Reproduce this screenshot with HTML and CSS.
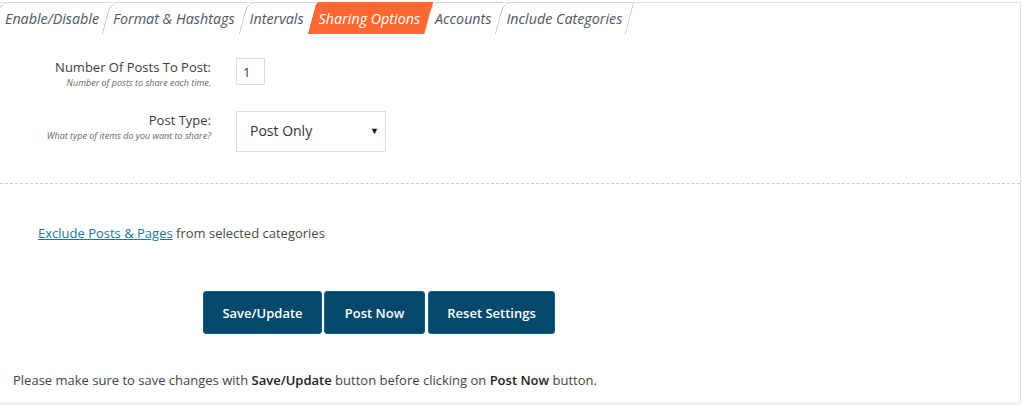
FILE: index.html
```html
<!DOCTYPE html>
<html>
<head>
<meta charset="utf-8">
<link rel="stylesheet" href="styles.css">
</head>
<body>
<div class="panel">
  <div class="tabs">
    <span class="tab first">Enable/Disable</span>
    <span class="tab">Format &amp; Hashtags</span>
    <span class="tab">Intervals</span>
    <span class="tab active">Sharing Options</span>
    <span class="tab">Accounts</span>
    <span class="tab last">Include Categories</span>
  </div>
  <div class="form">
    <div class="row row-num">
      <div class="label">
        <div class="title">Number Of Posts To Post:</div>
        <div class="desc">Number of posts to share each time.</div>
      </div>
      <div class="field"><input class="num" type="text" value="1"></div>
    </div>
    <div class="row row-type">
      <div class="label">
        <div class="title">Post Type:</div>
        <div class="desc">What type of items do you want to share?</div>
      </div>
      <div class="field">
        <div class="select"><span>Post Only</span><span class="arrow">▼</span></div>
      </div>
    </div>
  </div>
  <div class="sep"></div>
  <p class="exclude"><a href="#">Exclude Posts &amp; Pages</a> from selected categories</p>
  <div class="buttons">
    <button class="btn save">Save/Update</button>
    <button class="btn now">Post Now</button>
    <button class="btn reset">Reset Settings</button>
  </div>
  <p class="note">Please make sure to save changes with <b>Save/Update</b> button before clicking on <b>Post Now</b> button.</p>
</div>
<div class="bottom"></div>
</body>
</html>
```
FILE: styles.css
```css
html, body {
  margin: 0;
  padding: 0;
  background: #fff;
}
body {
  font-family: "Open Sans", "Liberation Sans", sans-serif;
  color: #444;
  width: 1023px;
  height: 405px;
  overflow: hidden;
}
.panel {
  margin-top: 2px;
  width: 1020px;
  height: 400px;
  border-top: 1px solid #e2e2e2;
  border-right: 1px solid #e2e2e2;
  position: relative;
}
.tabs {
  display: flex;
  height: 32px;
  margin-top: -1px;
  position: relative;
  z-index: 0;
}
.tab {
  position: relative;
  display: flex;
  align-items: center;
  padding: 1px 8px 0 7px;
  font-style: italic;
  font-size: 14.3px;
  color: #50575e;
  white-space: nowrap;
}
.tab::before {
  content: "";
  position: absolute;
  inset: 0;
  background: #fff;
  border-left: 1px solid #b9b9b9;
  border-top: 1px solid #d8d8d8;
  border-top-left-radius: 9px;
  transform: skewX(-15deg);
  z-index: -1;
}
.tab.first {
  padding-left: 5px;
  padding-right: 7px;
}
.tab.first::before {
  left: -4px;
}
.tab.last::before {
  border-right: 1px solid #b9b9b9;
}
.tab.active {
  color: #fff;
}
.tab.active::before {
  background: #fe6632;
  border-color: #fe6632;
  border-top-left-radius: 4px;
}
.form {
  display: flex;
  flex-direction: column;
  gap: 21px;
  padding-top: 24px;
}
.row {
  display: grid;
  grid-template-columns: 211px auto;
  column-gap: 25px;
}
.label {
  text-align: right;
}
.title {
  font-size: 13px;
  color: #3c3c3c;
  line-height: 18px;
}
.desc {
  font-size: 9px;
  font-style: italic;
  color: #666;
  line-height: 14px;
}
.num {
  box-sizing: border-box;
  width: 29px;
  height: 27px;
  border: 1px solid #ddd;
  padding: 0 0 0 6px;
  margin: 0;
  font-family: "Open Sans", "Liberation Sans", sans-serif;
  font-size: 13px;
  color: #333;
  outline: none;
}
.select {
  box-sizing: border-box;
  width: 150px;
  height: 41px;
  border: 1px solid #ddd;
  display: flex;
  align-items: center;
  justify-content: space-between;
  padding: 0 6px 2px 13px;
  font-size: 14px;
  color: #333;
}
.arrow {
  font-size: 9px;
  color: #111;
}
.sep {
  margin-top: 31px;
  border-top: 1px dashed #ccc;
}
.exclude {
  margin: 40px 0 0 38px;
  font-size: 13px;
  color: #4a4a4a;
  line-height: 18px;
}
.exclude a {
  color: #21759b;
  text-decoration: underline;
}
.buttons {
  display: flex;
  margin: 49px 0 0 203px;
}
.btn {
  box-sizing: border-box;
  height: 43px;
  background: #04496b;
  border: 1px solid #0d6188;
  border-radius: 3px;
  color: #fff;
  font-family: "Open Sans", "Liberation Sans", sans-serif;
  font-size: 13px;
  font-weight: 600;
  padding: 0;
}
.btn.save { width: 119px; }
.btn.now { width: 101px; margin-left: 2px; }
.btn.reset { width: 127px; margin-left: 3px; }
.note {
  margin: 37px 0 0 13px;
  font-size: 13px;
  color: #444;
  line-height: 18px;
}
.note b {
  font-weight: 600;
  color: #222;
}
.bottom {
  position: absolute;
  left: 0;
  top: 402px;
  width: 1020px;
  height: 3px;
  background: #f1f1f1;
}
```
